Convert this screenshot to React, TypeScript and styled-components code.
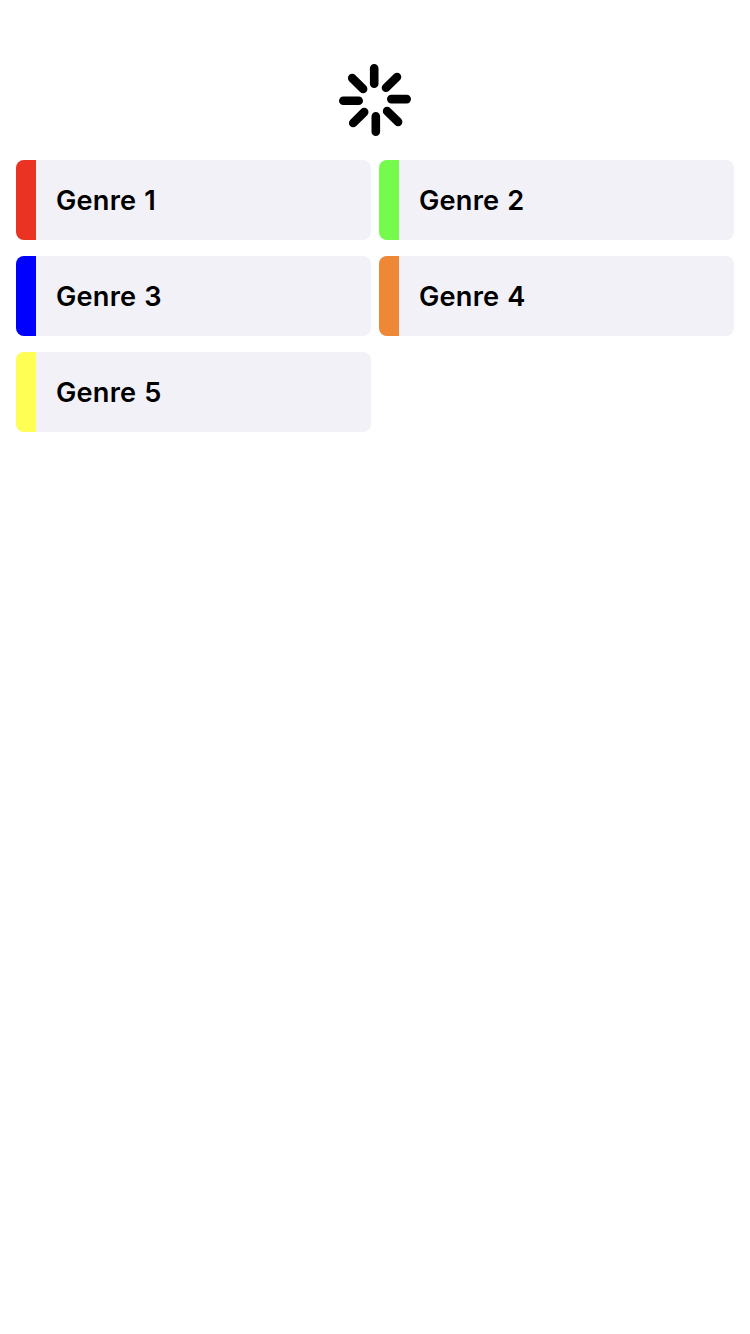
import React from "react";
import styled, { createGlobalStyle } from "styled-components";

const GlobalStyle = createGlobalStyle`
  * { box-sizing: border-box; }
  body {
    margin: 0;
    background: #ffffff;
    color: #000000;
    font-family: Inter, "Liberation Sans", sans-serif;
  }
`;

const Screen = styled.main`
  display: flex;
  flex-direction: column;
  min-height: 100vh;
  padding: 64px 16px 16px;
`;

const Spinner = styled.svg`
  width: 72px;
  height: 72px;
  margin: 0 auto 24px;
  display: block;
`;

const GenreGrid = styled.div`
  display: grid;
  grid-template-columns: 1fr 1fr;
  column-gap: 8px;
  row-gap: 16px;
`;

const GenreCard = styled.div`
  display: flex;
  height: 80px;
  border-radius: 8px;
  overflow: hidden;
  background: #f2f1f7;
`;

const Swatch = styled.div<{ $color: string }>`
  width: 20px;
  background: ${({ $color }) => $color};
`;

const GenreName = styled.div`
  display: flex;
  align-items: center;
  padding: 2px 0 0 20px;
  font-size: 27.2px;
  font-weight: 600;
  line-height: 34px;
  letter-spacing: 0.2px;
  word-spacing: 0.8px;
`;

const genres = [
  { name: "Genre 1", color: "#eb3323" },
  { name: "Genre 2", color: "#75fb4c" },
  { name: "Genre 3", color: "#0000ff" },
  { name: "Genre 4", color: "#ee8736" },
  { name: "Genre 5", color: "#fffe54" },
];

export default function App() {
  return (
    <>
      <GlobalStyle />
      <Screen>
        <Spinner viewBox="0 0 72 72" fill="none" stroke="#000" strokeWidth="8.6" strokeLinecap="round">
          <path d="M35.2 4.3v15.4M58 13L47 23.8M67.7 35.1H52.3M59.1 57.9L48.1 47.1M36.8 67.7V52.3M14.2 59L25.2 48.1M4.3 36.7H19.7M13.2 14.1L24.1 24.9" />
        </Spinner>
        <GenreGrid>
          {genres.map(({ name, color }) => (
            <GenreCard key={name}>
              <Swatch $color={color} />
              <GenreName>{name}</GenreName>
            </GenreCard>
          ))}
        </GenreGrid>
      </Screen>
    </>
  );
}
